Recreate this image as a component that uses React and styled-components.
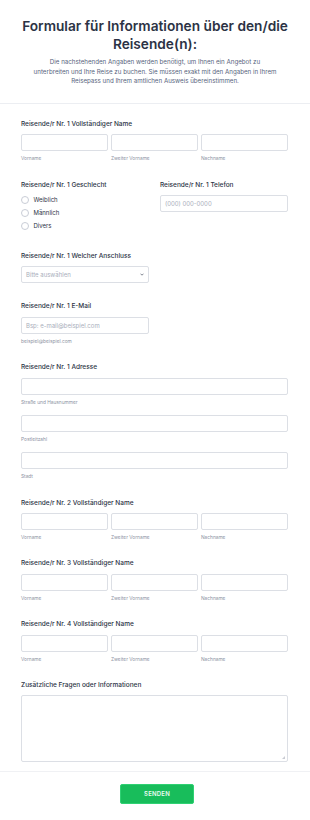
import React from 'react';
import styled, { createGlobalStyle } from 'styled-components';

const Global = createGlobalStyle`
  html, body { margin: 0; padding: 0; background: #ffffff; }
  body { font-family: Inter, "Noto Sans", sans-serif; color: #2c3345; }
  * { box-sizing: border-box; }
`;

const Page = styled.div`
  width: 310px;
  background: #fff;
`;

const Header = styled.header`
  padding: 18px 10px 17px;
  text-align: center;
  border-bottom: 1px solid #eceef2;
`;

const Title = styled.h1`
  margin: 0;
  font-size: 13.7px;
  line-height: 17.6px;
  font-weight: 600;
  color: #2c3345;
`;

const Subtitle = styled.p`
  margin: 3.7px 0 0;
  font-size: 6.2px;
  line-height: 9.7px;
  color: #57647e;
`;

const Form = styled.section`
  padding: 16px 22px 9px 21px;
`;

const Field = styled.div`
  margin-bottom: ${p => (p.$last ? '0' : '19.3px')};
`;

const Label = styled.div`
  font-size: 6.5px;
  line-height: 9px;
  font-weight: 500;
  color: #2c3345;
  margin-bottom: 5.5px;
  white-space: nowrap;
`;

const Input = styled.div`
  height: 17px;
  width: ${p => p.$w || '100%'};
  border: 1px solid #dcdfe5;
  border-radius: 2px;
  background: #fff;
  padding: 0 4px;
  display: flex;
  align-items: center;
  justify-content: space-between;
  font-size: 6px;
  color: #a9aebb;
  margin-top: ${p => p.$mt || '0'};
`;

const Sub = styled.div`
  margin-top: 4px;
  font-size: 4.8px;
  line-height: 6px;
  color: #8d93a3;
  white-space: nowrap;
`;

const NameGrid = styled.div`
  display: grid;
  grid-template-columns: repeat(3, 1fr);
  column-gap: 3px;
`;

const TwoCol = styled.div`
  display: grid;
  grid-template-columns: 128px 128px;
  column-gap: 11px;
  margin-bottom: 19.3px;
`;

const RadioList = styled.div`
  margin-top: -2px;
`;

const RadioRow = styled.label`
  display: flex;
  align-items: center;
  gap: 4.5px;
  height: 13px;
  font-size: 6px;
  color: #2c3345;
`;

const Circle = styled.span`
  width: 8px;
  height: 8px;
  border-radius: 50%;
  border: 1px solid #c9cdd6;
  background: #fff;
  flex: none;
`;

const TextAreaWrap = styled.div`
  position: relative;
  height: 67px;
  border: 1px solid #dcdfe5;
  border-radius: 2px;
  background: #fff;
`;

const Grip = styled.svg`
  position: absolute;
  right: 2px;
  bottom: 2px;
`;

const Footer = styled.footer`
  border-top: 1px solid #f0f1f4;
  padding: 11.5px 0 17px 4px;
  display: flex;
  justify-content: center;
`;

const Button = styled.button`
  width: 74px;
  height: 20px;
  border: 1px solid #2fd173;
  border-radius: 2px;
  background: #18bd5b;
  color: #e9fbf0;
  font-family: Inter, "Noto Sans", sans-serif;
  font-size: 6px;
  font-weight: 600;
  letter-spacing: 0.2px;
  padding: 0;
`;

const NameField = ({ n, last }) => (
  <Field $last={last}>
    <Label>Reisende/r Nr. {n} Vollständiger Name</Label>
    <NameGrid>
      {['Vorname', 'Zweiter Vorname', 'Nachname'].map(s => (
        <div key={s}>
          <Input />
          <Sub>{s}</Sub>
        </div>
      ))}
    </NameGrid>
  </Field>
);

const Chevron = () => (
  <svg width="4" height="3" viewBox="0 0 4 3">
    <path d="M0.5 0.7 L2 2.2 L3.5 0.7" fill="none" stroke="#5f6675" strokeWidth="0.8" />
  </svg>
);

export default function App() {
  return (
    <Page>
      <Global />
      <Header>
        <Title>Formular für Informationen über den/die Reisende(n):</Title>
        <Subtitle>
          Die nachstehenden Angaben werden benötigt, um Ihnen ein Angebot zu
          <br />
          unterbreiten und Ihre Reise zu buchen. Sie müssen exakt mit den Angaben in Ihrem
          <br />
          Reisepass und Ihrem amtlichen Ausweis übereinstimmen.
        </Subtitle>
      </Header>
      <Form>
        <NameField n={1} />
        <TwoCol>
          <div>
            <Label>Reisende/r Nr. 1 Geschlecht</Label>
            <RadioList>
              {['Weiblich', 'Männlich', 'Divers'].map(r => (
                <RadioRow key={r}>
                  <Circle />
                  {r}
                </RadioRow>
              ))}
            </RadioList>
          </div>
          <div>
            <Label>Reisende/r Nr. 1 Telefon</Label>
            <Input>(000) 000-0000</Input>
          </div>
        </TwoCol>
        <Field>
          <Label>Reisende/r Nr. 1 Welcher Anschluss</Label>
          <Input $w="128px">
            Bitte auswählen
            <Chevron />
          </Input>
        </Field>
        <Field>
          <Label>Reisende/r Nr. 1 E-Mail</Label>
          <Input $w="128px">Bsp: e-mail@beispiel.com</Input>
          <Sub>beispiel@beispiel.com</Sub>
        </Field>
        <Field>
          <Label>Reisende/r Nr. 1 Adresse</Label>
          <Input />
          <Sub>Straße und Hausnummer</Sub>
          <Input $mt="10.3px" />
          <Sub>Postleitzahl</Sub>
          <Input $mt="10.3px" />
          <Sub>Stadt</Sub>
        </Field>
        <NameField n={2} />
        <NameField n={3} />
        <NameField n={4} />
        <Field $last>
          <Label>Zusätzliche Fragen oder Informationen</Label>
          <TextAreaWrap>
            <Grip width="3" height="3" viewBox="0 0 3 3">
              <path d="M3 0 L3 3 L0 3 Z" fill="#c9ccd3" />
            </Grip>
          </TextAreaWrap>
        </Field>
      </Form>
      <Footer>
        <Button>SENDEN</Button>
      </Footer>
    </Page>
  );
}
